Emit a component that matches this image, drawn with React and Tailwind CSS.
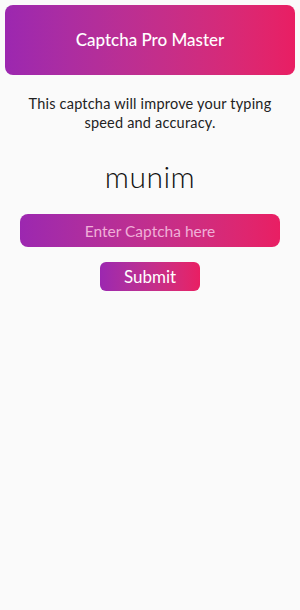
import React, { useState } from 'react';

export default function App() {
    const [value, setValue] = useState('');

    return (
        <div className="min-h-[610px] w-[300px] bg-[#fafafa] pt-[5px] px-[5px]" style={{ fontFamily: 'Lato, "Noto Sans", sans-serif' }}>
            {/* Header */}
            <div className="flex h-[70px] items-center justify-center rounded-[8px] bg-gradient-to-r from-[#9c27b0] to-[#e91e63]">
                <h1 className="text-[17px] font-medium text-white">Captcha Pro Master</h1>
            </div>

            <p className="mx-auto mt-[19px] w-[250px] text-center text-[14.5px] leading-[19px] text-[#222] tracking-[0.2px]">
                This captcha will improve your typing speed and accuracy.
            </p>

            <div className="mt-[24px] text-center text-[30px] font-light leading-[40px] text-[#111] tracking-[0.5px]">munim</div>

            <div className="mt-[18px] flex flex-col items-center">
                <input
                    value={value}
                    onChange={e => setValue(e.target.value)}
                    placeholder="Enter Captcha here"
                    className="h-[33px] w-[260px] rounded-[8px] bg-gradient-to-r from-[#9c27b0] to-[#e91e63] text-center text-[15.5px] text-white placeholder:text-[#f0b0d8] outline-none"
                />
                <button className="mt-[15px] flex h-[29px] w-[100px] items-center justify-center rounded-[6px] bg-gradient-to-r from-[#9c27b0] to-[#e91e63] text-[17px] text-white">
                    Submit
                </button>
            </div>
        </div>
    );
}
